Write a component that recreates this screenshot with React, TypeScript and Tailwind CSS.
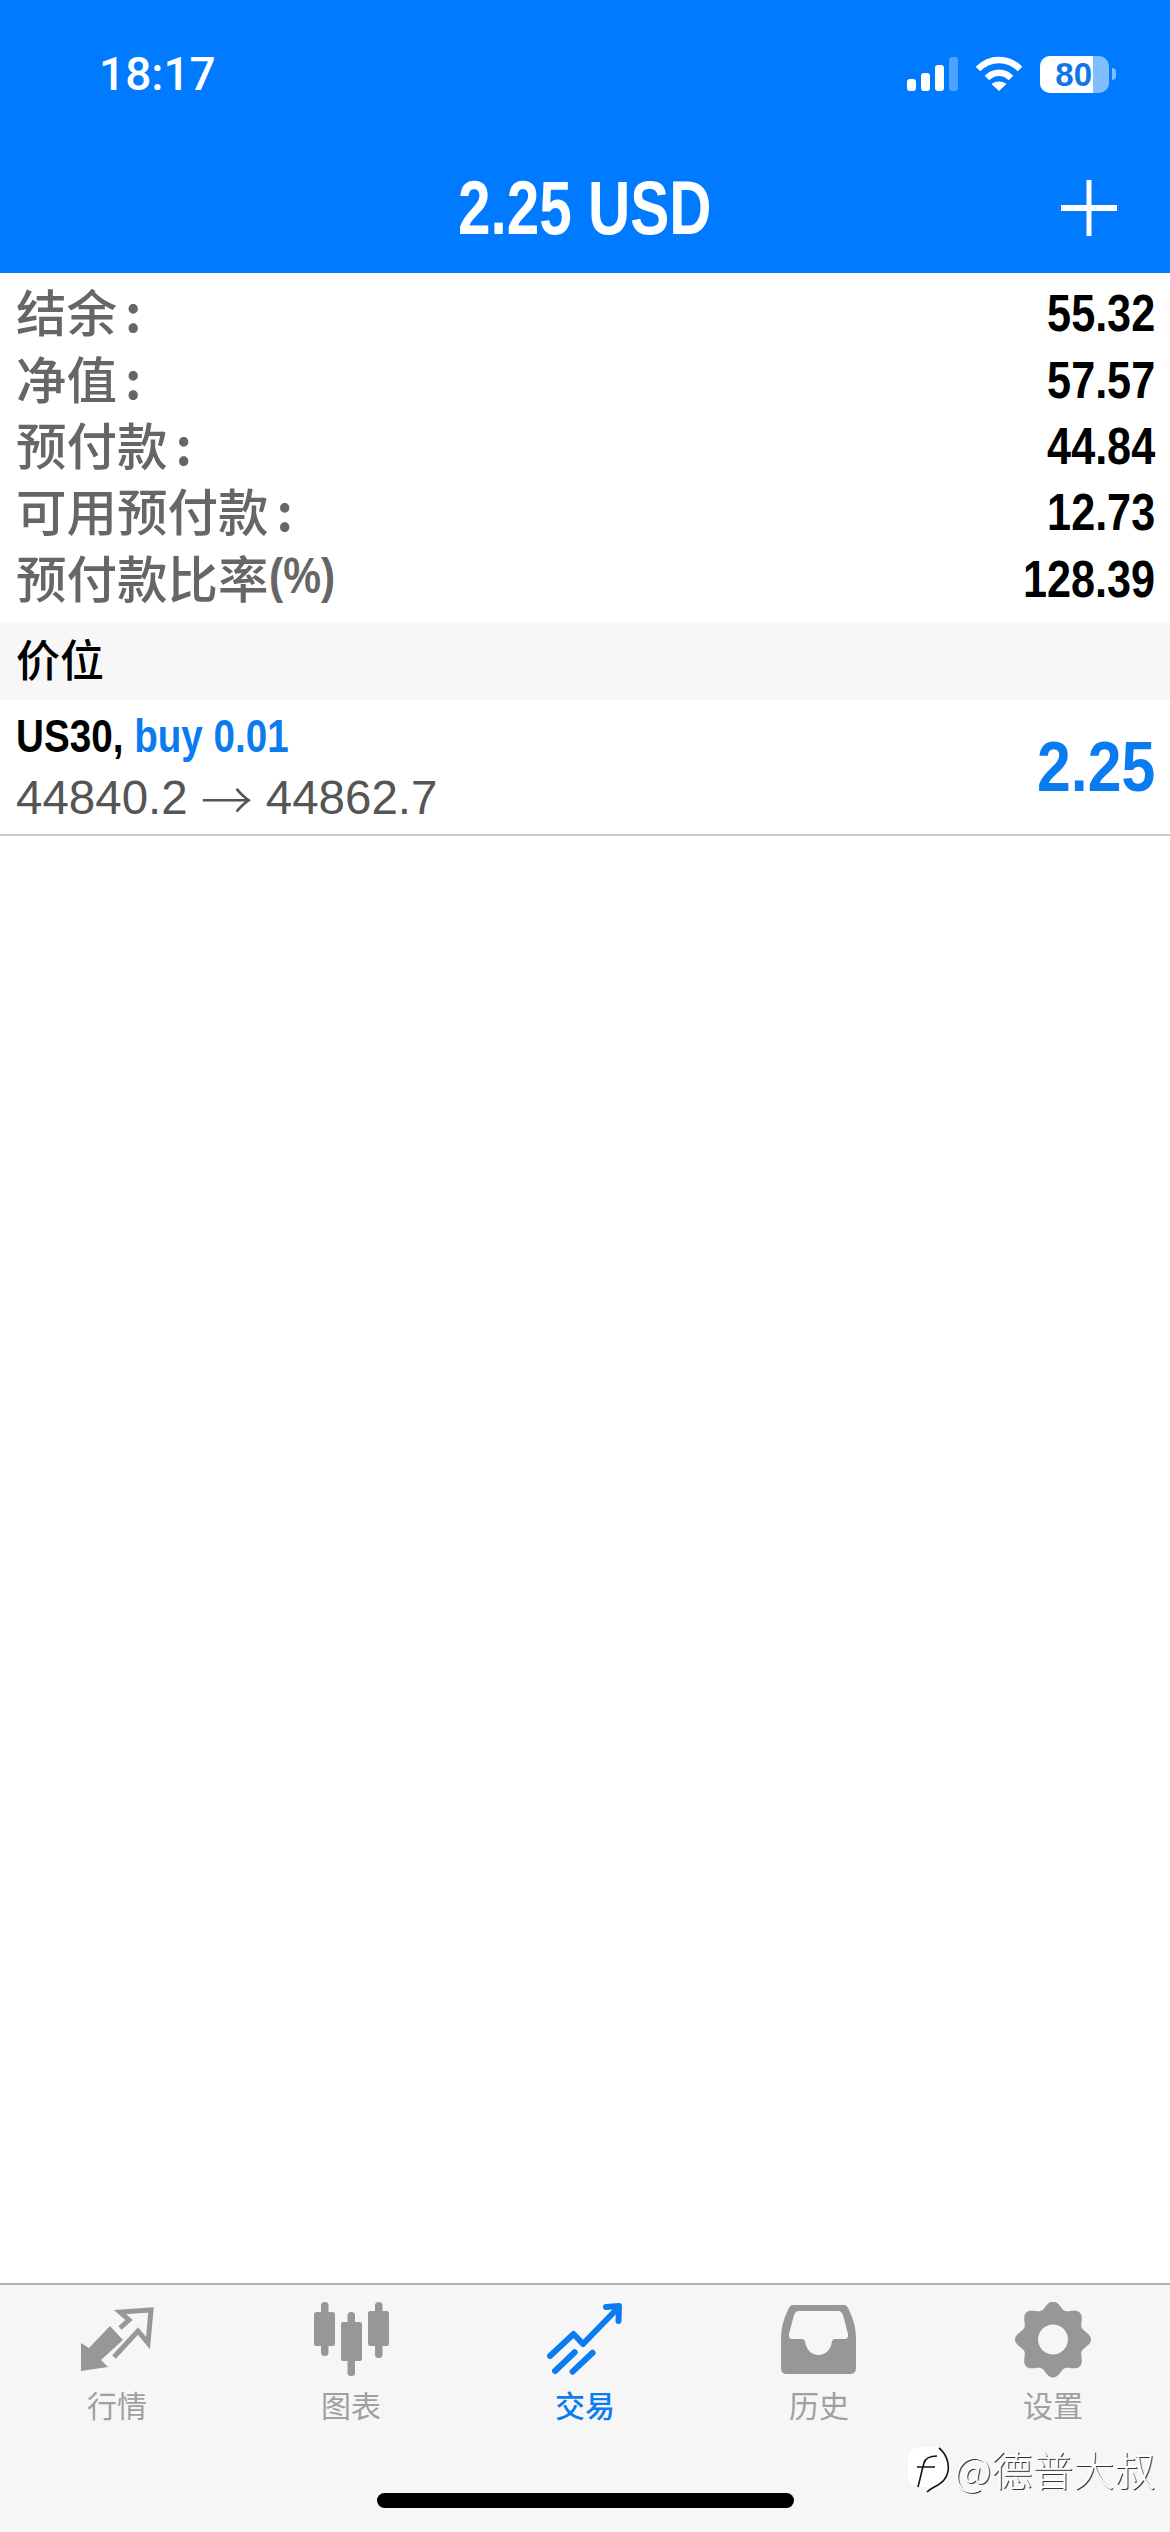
const accounts = [
  { label: '结余', colon: true, value: '55.32' },
  { label: '净值', colon: true, value: '57.57' },
  { label: '预付款', colon: true, value: '44.84' },
  { label: '可用预付款', colon: true, value: '12.73' },
  { label: '预付款比率', colon: false, value: '128.39' },
]

// rounded 8-tooth gear outline, centre (38, 37.5)
const gearPath = () => {
  const points: string[] = []
  for (let i = 0; i < 240; i++) {
    const a = (i / 240) * Math.PI * 2
    const r = 34.5 + 3.5 * Math.cos(8 * a)
    points.push(`${(38 + r * Math.sin(a)).toFixed(2)} ${(37.5 - r * Math.cos(a)).toFixed(2)}`)
  }
  return `M${points.join('L')}Z M38 22.5a15 15 0 1 0 0.01 0Z`
}

function MarketIcon() {
  return (
    <svg viewBox="0 0 76 76" className="h-[76px] w-[76px]">
      <path d="M2 41L10 46L31 24L44 38L22 58L29 65L2 69Z" fill="#979797" />
      <path d="M41 26L50 18L41 10L72 8L69 41L59 29L35 55" fill="none" stroke="#979797" strokeWidth="5" />
    </svg>
  )
}

function ChartIcon() {
  return (
    <svg viewBox="0 0 76 76" className="h-[76px] w-[76px]" fill="#979797">
      <rect x="8" y="0" width="7.5" height="54" rx="3.5" />
      <rect x="1" y="10" width="21" height="34" rx="2.5" />
      <rect x="34.5" y="10" width="7.5" height="64" rx="3.5" />
      <path fillRule="evenodd" d="M30 20H47a2 2 0 0 1 2 2V57a2 2 0 0 1-2 2H30a2 2 0 0 1-2-2V22a2 2 0 0 1 2-2ZM35 26V53H42V26Z" />
      <rect x="62" y="0" width="7.5" height="56" rx="3.5" />
      <rect x="55" y="9" width="21" height="35" rx="2.5" />
    </svg>
  )
}

function TradeIcon() {
  return (
    <svg viewBox="0 0 76 76" className="h-[76px] w-[76px]" fill="none" stroke="#0a7cf0" strokeWidth="6" strokeLinecap="round" strokeLinejoin="round">
      <path d="M3 54L26.5 32L36 42L69 8" />
      <path d="M59 5L72 4L71.5 19" />
      <path d="M8 69L27.7 50.3M25.6 69.7L45.6 50.7" />
    </svg>
  )
}

function HistoryIcon() {
  return (
    <svg viewBox="0 0 76 76" className="h-[76px] w-[76px]">
      <path
        fill="#979797"
        fillRule="evenodd"
        d="M12 3H63Q66 3 68 8Q75 22 75 36V66Q75 72 69 72H6Q0 72 0 66V36Q0 22 7 8Q9 3 12 3ZM17 9Q15 9 13 13L8 32Q7.5 37 11 37H21Q23 37 24 39C25 48 31 53 37.5 53C44 53 50 48 51 39Q52 37 54 37H64Q67.5 37 67 32L62 13Q60 9 58 9Z"
      />
    </svg>
  )
}

function SettingsIcon() {
  return (
    <svg viewBox="0 0 76 76" className="h-[76px] w-[76px]">
      <path fill="#979797" fillRule="evenodd" d={gearPath()} />
    </svg>
  )
}

const tabs = [
  { name: '行情', icon: MarketIcon },
  { name: '图表', icon: ChartIcon },
  { name: '交易', icon: TradeIcon, active: true },
  { name: '历史', icon: HistoryIcon },
  { name: '设置', icon: SettingsIcon },
]

function StatusIcons() {
  return (
    <div className="flex items-center">
      <svg viewBox="0 0 52 36" className="h-9 w-[52px]" fill="#fff">
        <rect x="0" y="23" width="9" height="12" rx="3" />
        <rect x="14" y="17" width="9" height="18" rx="3" />
        <rect x="28" y="9" width="9" height="26" rx="3" />
        <rect x="42" y="1" width="9" height="34" rx="3" fillOpacity="0.3" />
      </svg>
      <svg viewBox="0 0 48 36" className="ml-4 h-9 w-12" fill="none" stroke="#fff" strokeWidth="6.5">
        <path d="M3 13C15 1 33 1 45 13" />
        <path d="M12 22C19 15 29 15 36 22" />
        <path d="M24 35L16.5 28C20 24.5 28 24.5 31.5 28Z" fill="#fff" stroke="none" />
      </svg>
      <div className="relative ml-[17px] flex h-[37px] w-[69px] overflow-hidden rounded-[10px] bg-white/50">
        <div className="flex h-full w-[53px] items-center justify-end bg-white pr-px text-[33px] leading-none font-bold text-[#0f76e8]">
          80
        </div>
      </div>
      <div className="ml-[3px] h-3 w-1 rounded-r-full bg-white/50" />
    </div>
  )
}

export default function App() {
  return (
    <div className="flex h-[2532px] w-[1170px] flex-col overflow-hidden bg-white font-['Liberation_Sans','Noto_Sans_CJK_SC',sans-serif]">
      <header className="h-[273px] bg-[#007aff] pt-[49px] text-white">
        <div className="flex h-[50px] items-center justify-between pr-[54px] pl-[99px]">
          <span className="font-['Roboto'] text-[46px] font-medium">18:17</span>
          <StatusIcons />
        </div>
        <div className="mt-[69px] grid h-20 grid-cols-[1fr_auto_1fr] items-center">
          <div />
          <h1 className="scale-x-[0.77] text-[76px] leading-none font-bold whitespace-nowrap">2.25 USD</h1>
          <div className="flex justify-end pr-[53px]">
            <svg viewBox="0 0 56 56" className="h-14 w-14" fill="#fff">
              <rect x="25.5" y="0" width="5" height="56" />
              <rect x="0" y="25" width="56" height="6" />
            </svg>
          </div>
        </div>
      </header>

      <section className="pt-[7px] pb-[10px]">
        {accounts.map((row) => (
          <div key={row.label} className="flex h-[66.4px] items-center justify-between pr-[15px] pl-[16px]">
            <span className="flex items-center pb-[6px] font-['Noto_Sans_CJK_SC'] text-[50.5px] leading-[60px] font-medium whitespace-nowrap text-[#666]">
              {row.label}
              {row.colon ? (
                <span className="ml-2 font-bold">:</span>
              ) : (
                <span className="origin-left scale-x-[0.85] font-['Liberation_Sans'] text-[50px] font-bold">(%)</span>
              )}
            </span>
            <span className="origin-right scale-x-[0.83] text-[52px] leading-none font-bold text-black">{row.value}</span>
          </div>
        ))}
      </section>

      <div className="flex h-[78px] items-center bg-[#f7f7f7] pb-[5px] pl-4 font-['Noto_Sans_CJK_SC'] text-[44px] leading-[60px] font-medium text-black">价位</div>

      <div className="flex h-[136px] items-center justify-between border-b-2 border-[#c8c8c8] pr-[15px] pl-4">
        <div>
          <div className="origin-left scale-x-[0.84] text-[46px] leading-[62px] font-bold whitespace-nowrap text-black">
            US30, <span className="text-[#0a7cf0]">buy 0.01</span>
          </div>
          <div className="flex h-[62px] items-center gap-[13px] text-[47.5px] leading-none whitespace-nowrap text-[#555]">
            <span>44840.2</span>
            <span className="font-['Noto_Sans_CJK_SC'] text-[52px] leading-none font-light">→</span>
            <span>44862.7</span>
          </div>
        </div>
        <span className="origin-right scale-x-[0.855] text-[71px] leading-none font-bold text-[#0a7cf0]">2.25</span>
      </div>

      <div className="flex-1" />

      <nav className="relative h-[249px] border-t-2 border-[#b3b3b3] bg-[#f6f6f6]">
        <div className="grid grid-cols-5 pt-[17px]">
          {tabs.map((tab) => (
            <div key={tab.name} className="flex flex-col items-center">
              <tab.icon />
              <span className={`mt-[11px] text-[30px] leading-9 ${tab.active ? 'font-medium text-[#0a7cf0]' : 'text-[#a0a0a0]'}`}>
                {tab.name}
              </span>
            </div>
          ))}
        </div>
        <div className="absolute bottom-6 left-[377px] h-[15px] w-[417px] rounded-full bg-black" />
        {/* watermark */}
        <div className="absolute top-[160px] left-[908px] flex items-center">
          <svg viewBox="0 0 44 48" className="h-12 w-11">
            <rect x="0" y="2" width="40" height="40" rx="12" fill="#fff" />
            <path d="M10 42C13 30 14 25 16 18Q18 11 29 11M9 22H27M31 3C40 10 44 25 36 35C31 41 24 42 19 47" fill="none" stroke="#111" strokeWidth="1.6" />
          </svg>
          <span className="-mt-[3px] ml-[2px] font-['Noto_Sans_CJK_SC'] text-[41px] leading-[48px] font-light whitespace-nowrap text-white [text-shadow:1px_1px_0_#333]">
            @德普大叔
          </span>
        </div>
      </nav>
    </div>
  )
}
